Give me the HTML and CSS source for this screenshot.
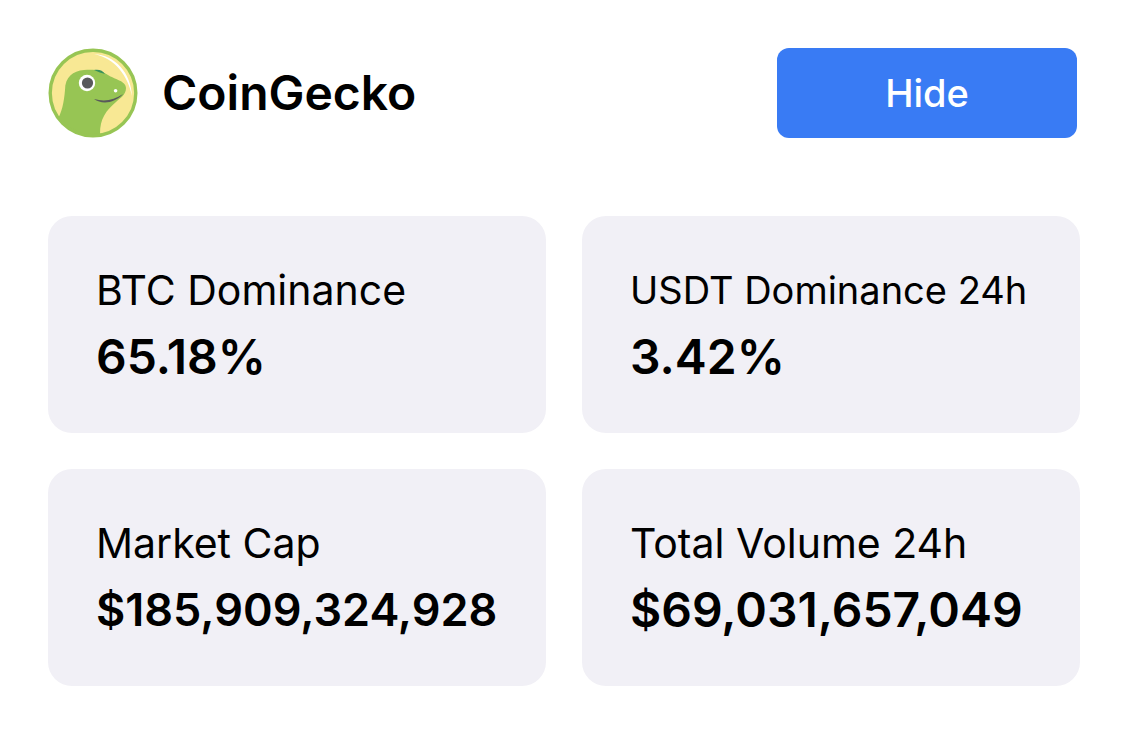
FILE: index.html
```html
<!DOCTYPE html>
<html lang="en">
<head>
  <meta charset="UTF-8">
  <meta name="viewport" content="width=device-width, initial-scale=1.0">
  <title>CoinGecko</title>
  <link rel="stylesheet" href="styles.css">
</head>
<body>
  <header>
    <svg class="logo" viewBox="0 0 90 90" aria-hidden="true">
      <defs>
        <clipPath id="face"><circle cx="45" cy="45" r="43"/></clipPath>
      </defs>
      <circle cx="45" cy="45" r="43" fill="#f8e894"/>
      <path clip-path="url(#face)" fill="#97c554" d="M8 74C14 65 16 54 17 42C17 29 25 23 36 22C46 21 53 22 60 27C66 31 78 33 78 40C78 47 72 50 68 54C58 63 52 70 52 86L52 92H8Z"/>
      <path fill="#fff" d="M46 6C67 7 83 25 84 48C80 28 67 10 46 6Z"/>
      <path fill="#38905b" d="M46 22C50 21 55 22 57 26C54 25 50 24 46 22Z"/>
      <circle cx="39" cy="35" r="8.2" fill="#fff"/>
      <circle cx="39.5" cy="35" r="5.6" fill="#58595b"/>
      <circle cx="67.6" cy="42.8" r="1.8" fill="#fff"/>
      <path fill="#58595b" d="M46 51C57 54 66 52 75 46C67 55 54 57 46 51Z"/>
      <circle cx="45" cy="45" r="42.8" fill="none" stroke="#97c554" stroke-width="3.4"/>
    </svg>
    <h1>CoinGecko</h1>
    <button type="button" id="toggle">Hide</button>
  </header>
  <main id="stats">
    <section class="card">
      <h2>BTC Dominance</h2>
      <p>65.18%</p>
    </section>
    <section class="card">
      <h2 class="small">USDT Dominance 24h</h2>
      <p>3.42%</p>
    </section>
    <section class="card">
      <h2>Market Cap</h2>
      <p class="small">$185,909,324,928</p>
    </section>
    <section class="card">
      <h2>Total Volume 24h</h2>
      <p>$69,031,657,049</p>
    </section>
  </main>
  <script>
    const button = document.getElementById('toggle');
    const stats = document.getElementById('stats');

    button.addEventListener('click', function() {
      stats.hidden = !stats.hidden;
      button.textContent = stats.hidden ? 'Show' : 'Hide';
    });
  </script>
</body>
</html>
```
FILE: styles.css
```css
body {
  margin: 0;
  padding: 48px 45px 60px 48px;
  font-family: Inter, "Liberation Sans", sans-serif;
  color: #000;
  background-color: #fff;
}

header {
  display: flex;
  align-items: center;
  padding-right: 3px;
  margin-bottom: 78px;
}

.logo {
  width: 90px;
  height: 90px;
  flex: none;
}

h1 {
  margin: 0 auto 0 24px;
  font-size: 48px;
  line-height: 58px;
  font-weight: 600;
}

button {
  width: 300px;
  height: 90px;
  padding: 0;
  border: none;
  border-radius: 12px;
  background-color: #397bf4;
  color: #fff;
  font-family: inherit;
  font-size: 38px;
  font-weight: 500;
  cursor: pointer;
}

main {
  display: grid;
  grid-template-columns: 1fr 1fr;
  gap: 36px;
}

main[hidden] {
  display: none;
}

.card {
  min-width: 0;
  padding: 48px 36px 47px 48px;
  border-radius: 24px;
  background-color: #f1f0f6;
  white-space: nowrap;
}

.card h2 {
  margin: 0 0 12px;
  font-size: 41px;
  line-height: 52px;
  font-weight: 400;
}

.card h2.small {
  font-size: 38px;
}

.card p {
  margin: 0;
  font-size: 48px;
  line-height: 58px;
  font-weight: 600;
}

.card p.small {
  font-size: 45px;
}
```
